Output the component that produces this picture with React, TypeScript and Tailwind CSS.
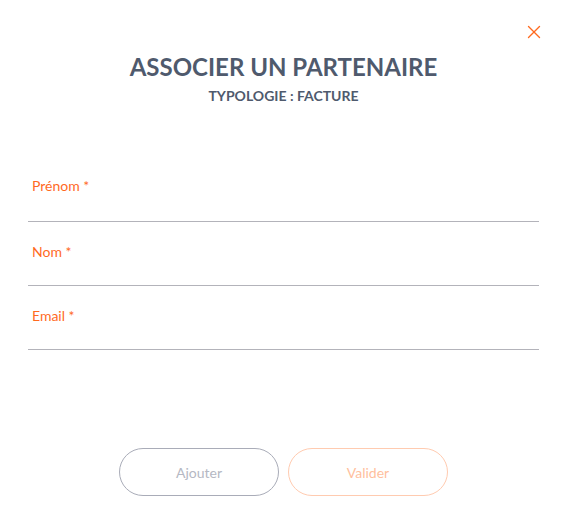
import { X } from "lucide-react";

const fields = ["Prénom", "Nom", "Email"];

export default function App() {
  return (
    <div className="relative h-[507px] w-[567px] bg-white font-['Lato',sans-serif]">
      <button type="button" className="absolute right-[22px] top-[21px] text-[#ff6a1f]">
        <X size={22} strokeWidth={1.5} />
      </button>
      <header className="pt-[52px] text-center">
        <h1 className="text-[24px] font-bold leading-[30px] text-[#4f5a6d]">ASSOCIER UN PARTENAIRE</h1>
        <p className="mt-[5px] text-[14px] font-bold leading-[18px] text-[#4f5a6d]">TYPOLOGIE : FACTURE</p>
      </header>
      <form className="mt-[72px] px-[28px]">
        {fields.map((f) => (
          <div key={f} className="h-[64px] border-b border-[#b3b3ba] first:h-[45px] [&:not(:first-child)]:pt-[21px]">
            <label className="block pl-[4px] text-[14px] leading-[18px] text-[#ff6a1f]">
              {f} *
            </label>
          </div>
        ))}
      </form>
      <div className="mt-[98px] flex justify-center gap-[9px]">
        <button
          type="button"
          className="h-[48px] w-[160px] rounded-full border border-[#a9acb8] text-[14px] text-[#b5b8c3]"
        >
          Ajouter
        </button>
        <button
          type="button"
          className="h-[48px] w-[160px] rounded-full border border-[#ffcbb0] text-[14px] text-[#ffbf9e]"
        >
          Valider
        </button>
      </div>
    </div>
  );
}
